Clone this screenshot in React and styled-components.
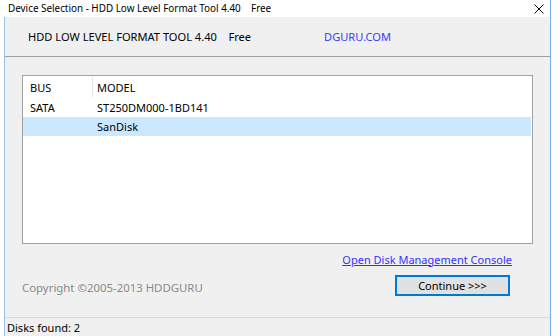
import React from "react";
import styled, { createGlobalStyle } from "styled-components";

const Global = createGlobalStyle`
  html, body { margin: 0; padding: 0; background: #ffffff; overflow: hidden; }
  body { font-family: "Noto Sans", "Open Sans", sans-serif; font-size: 11px; color: #000; }
`;

const Screen = styled.div`
  width: 560px;
  height: 336px;
  display: flex;
  background: #ffffff;
`;

const Window = styled.div`
  width: 550px;
  height: 336px;
  display: flex;
  flex-direction: column;
  border-right: 1px solid #74aee0;
`;

const TitleBar = styled.div`
  height: 17px;
  display: flex;
  align-items: center;
  justify-content: space-between;
  padding: 0 6px 0 8px;
  background: #ffffff;
  font-size: 9.9px;
  line-height: 17px;
  white-space: pre;
`;

const Close = styled.svg`
  width: 10px;
  height: 10px;
  margin-top: 1px;
`;

const Client = styled.div`
  flex: 1;
  margin-left: 4px;
  display: flex;
  flex-direction: column;
  background: #f0f0f0;
  border-left: 1px solid #9fc3e6;
`;

const Header = styled.div`
  height: 39px;
  display: flex;
  align-items: center;
  padding-left: 23px;
  border-bottom: 1px solid #a0a0a0;
  font-size: 11.1px;
  white-space: pre;
  overflow: hidden;
`;

const HeaderLink = styled.span`
  display: inline-flex;
  justify-content: flex-end;
  overflow: hidden;
  width: 67px;
  color: #3a3aff;
  margin-left: ${p => p.$gap}px;
`;

const Main = styled.div`
  flex: 1;
  display: flex;
  flex-direction: column;
  padding: 18px 17px 0 17px;
`;

const ListBox = styled.div`
  height: 166px;
  background: #ffffff;
  border: 1px solid #a0a0a0;
  display: flex;
  flex-direction: column;
  padding-top: 1px;
`;

const Row = styled.div`
  display: grid;
  grid-template-columns: 69px 1fr;
  height: ${p => p.$h}px;
  align-items: center;
  background: ${p => (p.$selected ? "#cce8ff" : "transparent")};
  margin-right: 1px;
`;

const Cell = styled.div`
  padding-left: ${p => (p.$first ? 7 : 5)}px;
  height: 100%;
  display: flex;
  align-items: center;
  border-right: ${p => (p.$sep ? "1px solid #e5e5e5" : "none")};
  margin-right: ${p => (p.$sep ? "-1px" : "0")};
`;

const LinkRow = styled.div`
  display: flex;
  justify-content: flex-end;
  padding-right: 21px;
  margin-top: 6px;
  height: 18px;
  align-items: center;
`;

const Link = styled.a`
  color: #3333ff;
  text-decoration: underline;
  font-size: 11px;
  cursor: pointer;
`;

const BottomRow = styled.div`
  display: flex;
  align-items: center;
  justify-content: space-between;
  margin-top: 7px;
  padding-right: 23px;
  height: 21px;
`;

const Copyright = styled.span`
  color: #8a8a8a;
  font-size: 11.4px;
  margin-top: 3px;
`;

const Button = styled.button`
  width: 115px;
  height: 21px;
  background: #e1e1e1;
  border: 1px solid #0078d7;
  box-shadow: inset 0 0 0 1px #0078d7;
  font-family: inherit;
  font-size: 11px;
  color: #000;
  padding: 0;
`;

const StatusBar = styled.div`
  height: 18px;
  margin-top: auto;
  border-top: 1px solid #dadada;
  display: flex;
  align-items: center;
  padding-left: 2px;
  font-size: 11px;
`;

export default function App() {
  return (
    <>
      <Global />
      <Screen>
        <Window>
          <TitleBar>
            <span>Device Selection - HDD Low Level Format Tool 4.40    Free</span>
            <Close viewBox="0 0 10 10">
              <path d="M0.5 0.5 L9.5 9.5 M9.5 0.5 L0.5 9.5" stroke="#000" strokeWidth="1" fill="none" />
            </Close>
          </TitleBar>
          <Client>
            <Header>
              <span>HDD LOW LEVEL FORMAT TOOL 4.40    Free</span>
              <HeaderLink $gap={73}>
                <span>HDDGURU.COM</span>
              </HeaderLink>
            </Header>
            <Main>
              <ListBox>
                <Row $h={20}>
                  <Cell $first $sep>BUS</Cell>
                  <Cell>MODEL</Cell>
                </Row>
                <Row $h={20}>
                  <Cell $first>SATA</Cell>
                  <Cell>ST250DM000-1BD141</Cell>
                </Row>
                <Row $h={19} $selected>
                  <Cell $first></Cell>
                  <Cell>SanDisk</Cell>
                </Row>
              </ListBox>
              <LinkRow>
                <Link>Open Disk Management Console</Link>
              </LinkRow>
              <BottomRow>
                <Copyright>Copyright ©2005-2013 HDDGURU</Copyright>
                <Button>Continue &gt;&gt;&gt;</Button>
              </BottomRow>
            </Main>
            <StatusBar>Disks found: 2</StatusBar>
          </Client>
        </Window>
      </Screen>
    </>
  );
}
